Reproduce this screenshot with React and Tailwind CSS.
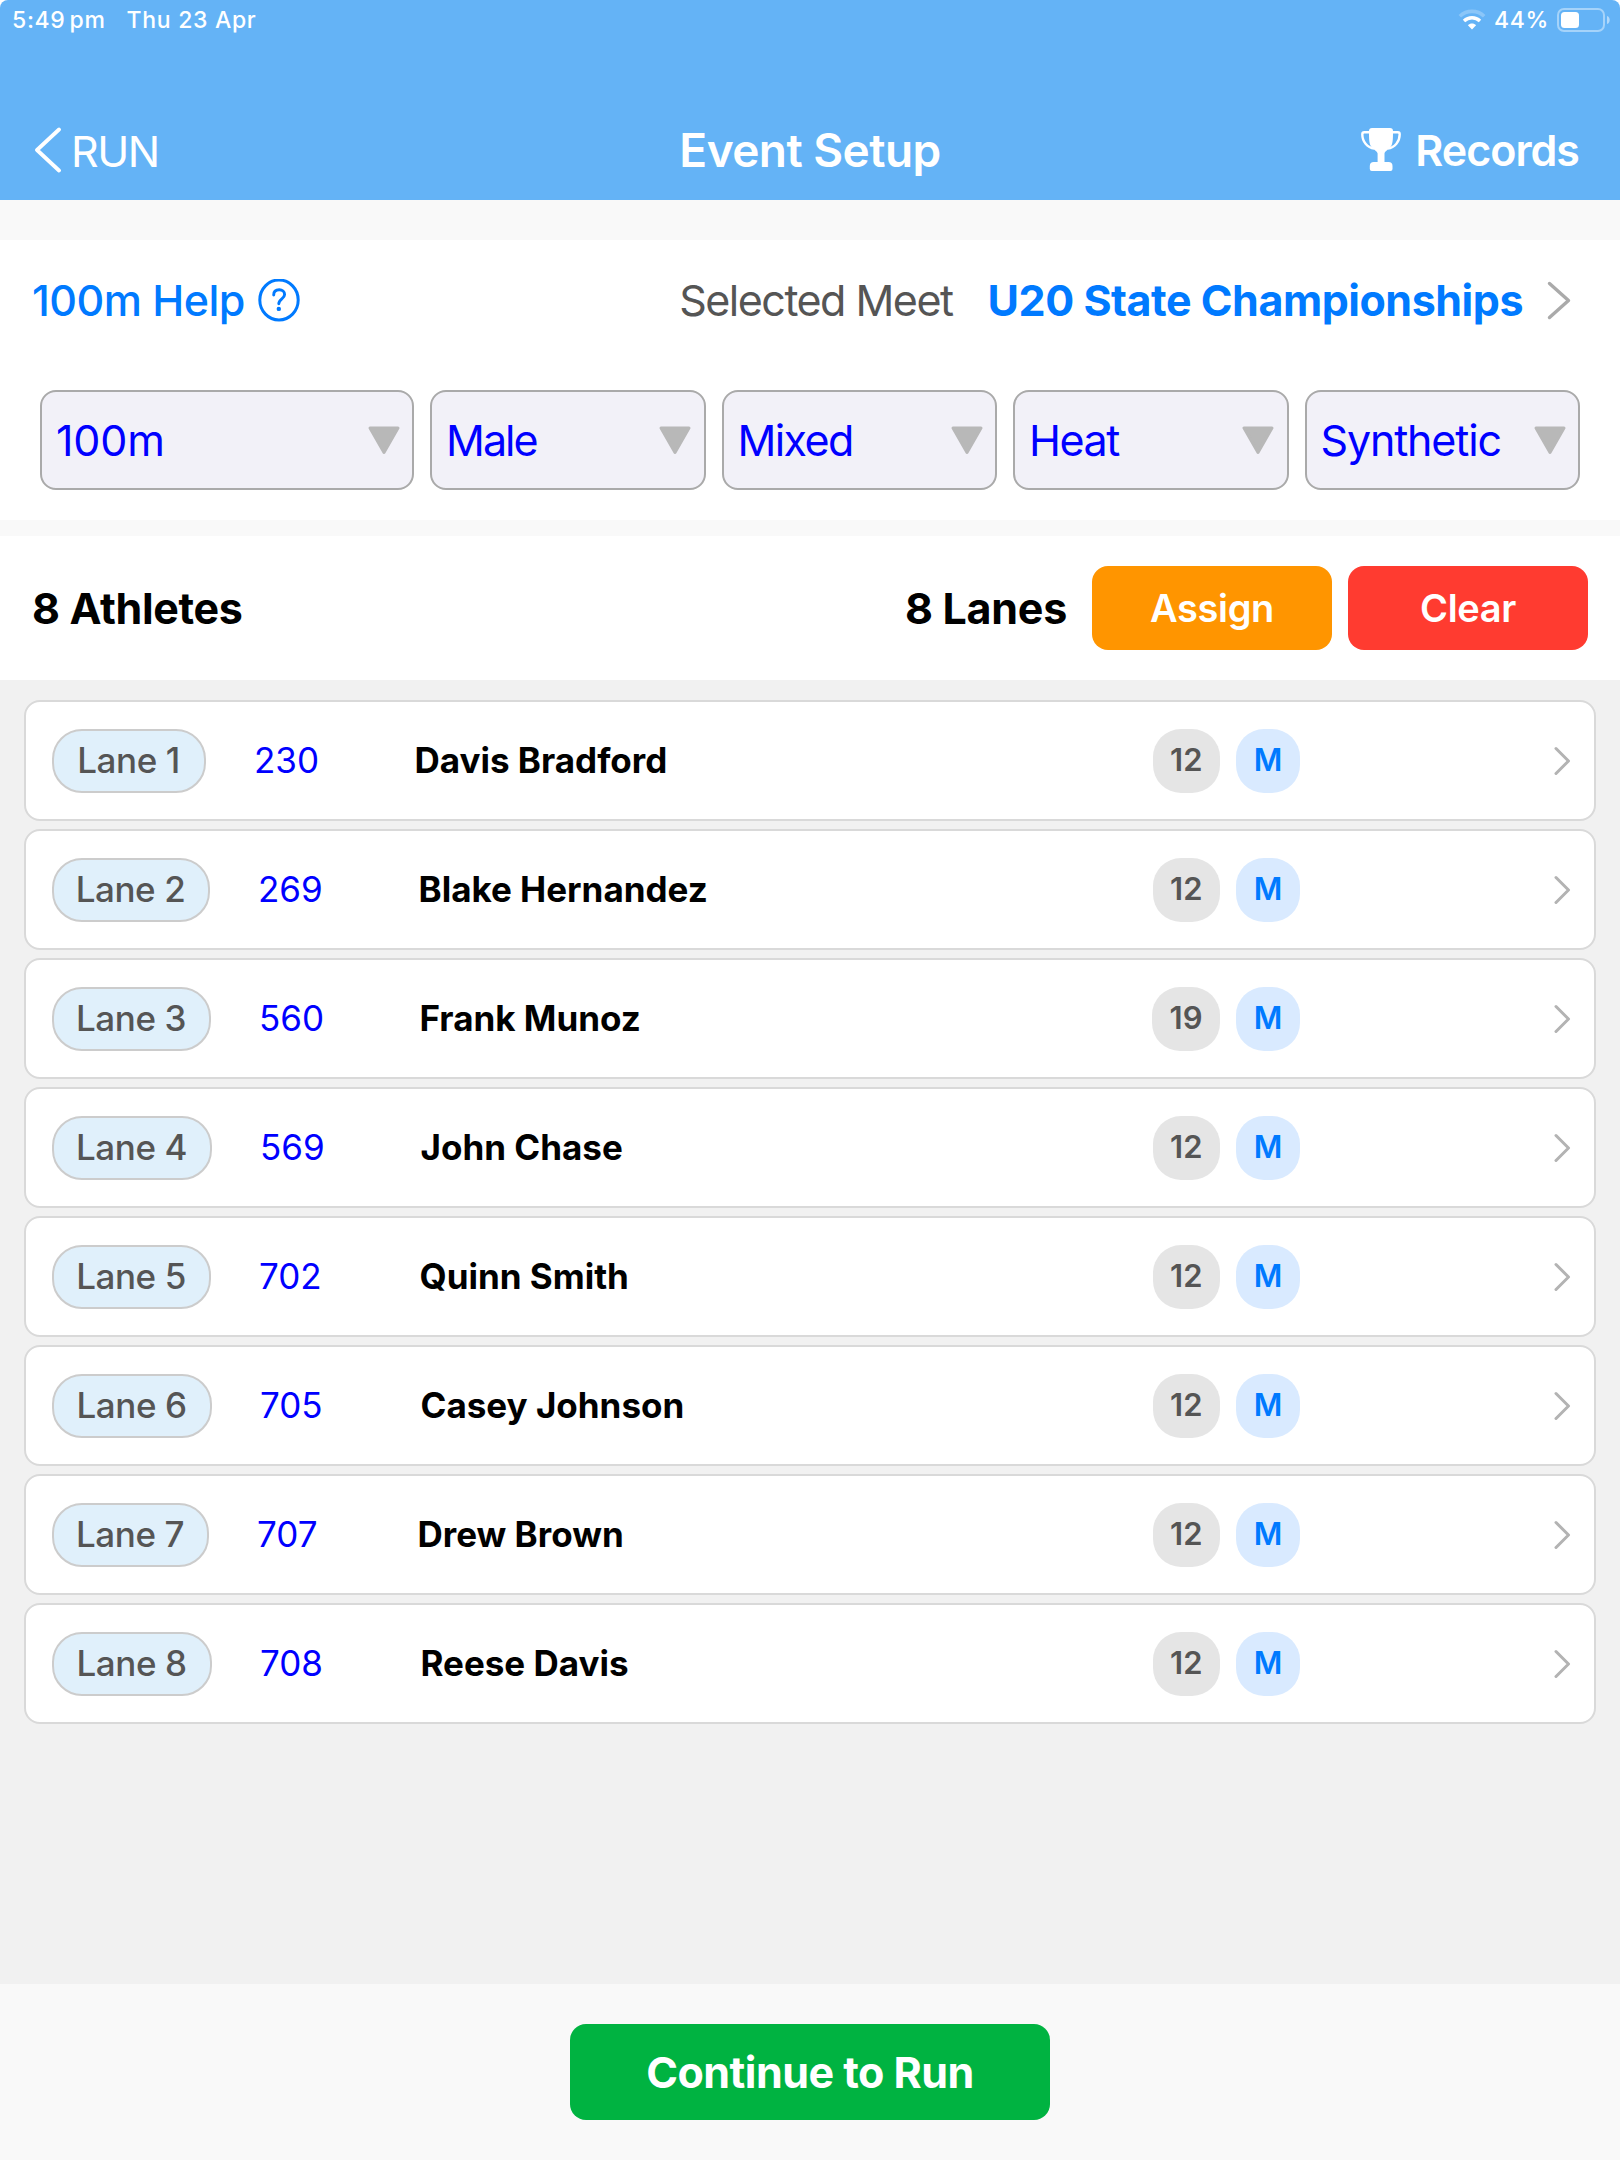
import { useState } from "react";

const athletes = [
  { lane: 1, bib: "230", name: "Davis Bradford", age: 12, sex: "M", pill: "w-[154px]" },
  { lane: 2, bib: "269", name: "Blake Hernandez", age: 12, sex: "M", pill: "w-[158px]" },
  { lane: 3, bib: "560", name: "Frank Munoz", age: 19, sex: "M", pill: "w-[159px]" },
  { lane: 4, bib: "569", name: "John Chase", age: 12, sex: "M", pill: "w-[160px]" },
  { lane: 5, bib: "702", name: "Quinn Smith", age: 12, sex: "M", pill: "w-[159px]" },
  { lane: 6, bib: "705", name: "Casey Johnson", age: 12, sex: "M", pill: "w-[160px]" },
  { lane: 7, bib: "707", name: "Drew Brown", age: 12, sex: "M", pill: "w-[157px]" },
  { lane: 8, bib: "708", name: "Reese Davis", age: 12, sex: "M", pill: "w-[160px]" },
];

function WifiIcon() {
  return (
    <svg width="28" height="21" viewBox="0 0 28 21" fill="none">
      <path d="M1.8 7.2C8.6 .7 19.4 .7 26.2 7.2" stroke="white" strokeOpacity="0.25" strokeWidth="3.6" />
      <path d="M6 12C10.6 7.6 17.4 7.6 22 12" stroke="white" strokeWidth="3.4" />
      <path d="M14 20.4 9.9 16.2C12.2 13.8 15.8 13.8 18.1 16.2Z" fill="white" />
    </svg>
  );
}

function BatteryIcon() {
  return (
    <svg width="54" height="24" viewBox="0 0 54 24" fill="none">
      <rect x="1" y="1" width="46" height="22" rx="6" stroke="white" strokeOpacity="0.42" strokeWidth="2" />
      <rect x="4" y="4" width="18" height="16" rx="3.5" fill="white" />
      <path d="M50 8C53.6 9 53.6 15 50 16Z" fill="white" fillOpacity="0.5" />
    </svg>
  );
}

function TrophyIcon() {
  return (
    <svg width="40" height="43" viewBox="0 0 40 43" fill="none">
      <path d="M9 4.2H3.2Q1.3 4.2 1.3 6.2C1.3 13.5 6 19.3 13.5 20.6" stroke="white" strokeWidth="2.4" />
      <path d="M31 4.2H36.8Q38.7 4.2 38.7 6.2C38.7 13.5 34 19.3 26.5 20.6" stroke="white" strokeWidth="2.4" />
      <path
        d="M11 0H29Q32 0 32 3C32 10 32 14 30.5 17.5C28.6 21 23.5 23.2 23.5 25.5V34H27.5Q31.5 34 31.5 38V41Q31.5 43 29.5 43H10.8Q8.8 43 8.8 41V38Q8.8 34 12.8 34H16.6V25.5C16.6 23.2 11.4 21 9.5 17.5C8 14 8 10 8 3Q8 0 11 0Z"
        fill="white"
      />
    </svg>
  );
}

function HelpIcon() {
  return (
    <svg width="42" height="44" viewBox="0 0 42 44" fill="none" stroke="#007aff">
      <ellipse cx="21" cy="21" rx="19.2" ry="20" strokeWidth="3" />
      <path d="M15.7 16C15.7 12.6 18 10.8 21.2 10.8C24.4 10.8 26.6 12.6 26.6 15.4C26.6 20 20.8 19.6 20.8 24.8" strokeWidth="2.9" strokeLinecap="round" />
      <circle cx="20.8" cy="29.9" r="2.2" fill="#007aff" stroke="none" />
    </svg>
  );
}

function Select({ value, className }) {
  return (
    <button
      className={`flex h-[100px] items-center justify-between rounded-[16px] border-2 border-[#aaaaaa] bg-[#f2f1f8] pr-[11.5px] pl-[14px] text-[43px] text-[#0000ff] ${className}`}
    >
      <span>{value}</span>
      <svg width="34" height="29" viewBox="0 0 34 29" className="shrink-0">
        <path d="M3 2H31L17 26.5Z" fill="#b8b8b8" stroke="#b8b8b8" strokeWidth="3" strokeLinejoin="round" />
      </svg>
    </button>
  );
}

function AthleteRow({ athlete }) {
  return (
    <div className="flex h-[121px] items-center rounded-[16px] border-2 border-[#d9d9d9] bg-white pr-[23px] pl-[26px]">
      <span
        className={`flex h-16 items-center justify-center rounded-[30px] border-2 border-[#cccccc] bg-[#e0f0fb] pr-px text-[35px] font-medium tracking-[-0.012em] text-[#555555] ${athlete.pill}`}
      >
        Lane {athlete.lane}
      </span>
      <span className="ml-[48px] w-[160px] text-[35px] text-[#0000ff]">{athlete.bib}</span>
      <span className="ml-[0.5px] text-[35px] font-bold text-black">{athlete.name}</span>
      <span className="ml-auto flex h-16 items-center rounded-[28px] bg-[#e5e5e5] px-[17.5px] text-[31px] font-semibold text-[#555555]">
        {athlete.age}
      </span>
      <span className="mr-[254px] ml-4 flex h-16 w-16 items-center justify-center rounded-[28px] bg-[#d9eaff] text-[31px] font-semibold text-[#007aff]">
        {athlete.sex}
      </span>
      <svg width="17" height="30" viewBox="0 0 17 30" fill="none">
        <path d="M2 2.5 14.5 15 2 27.5" stroke="#b3b3b3" strokeWidth="3" strokeLinecap="round" strokeLinejoin="round" />
      </svg>
    </div>
  );
}

function App() {
  const [list, setList] = useState(athletes);

  return (
    <div className="flex h-[2160px] w-[1620px] flex-col bg-white font-[Inter,sans-serif] whitespace-nowrap">
      <header className="flex h-[200px] flex-col rounded-t-[8px] bg-[#64b3f6] text-white">
        <div className="flex h-10 items-center pr-[9px] pl-3 text-[23px] font-medium tracking-[0.03em]">
          <span>5:49</span>
          <span className="ml-1">pm</span>
          <span className="ml-[21px]">Thu 23 Apr</span>
          <div className="ml-auto flex items-center">
            <WifiIcon />
            <span className="mr-2 ml-2">44%</span>
            <BatteryIcon />
          </div>
        </div>
        <div className="mt-[60px] grid h-[101px] grid-cols-3 items-center">
          <button className="flex items-center pl-[34px]">
            <svg width="28" height="46" viewBox="0 0 28 46" fill="none">
              <path d="M25 2.5 3 23 25 43.5" stroke="white" strokeWidth="3.8" strokeLinecap="round" strokeLinejoin="round" />
            </svg>
            <span className="mt-0.5 ml-[9px] text-[43px] tracking-[-0.035em]">RUN</span>
          </button>
          <h1 className="mt-px text-center text-[46px] font-semibold tracking-[-0.012em]">Event Setup</h1>
          <button className="flex items-center justify-end pr-[41px]">
            <TrophyIcon />
            <span className="ml-[14px] text-[43px] font-semibold tracking-[-0.023em]">Records</span>
          </button>
        </div>
      </header>

      <div className="h-10 bg-[#f9f9f9]" />

      <section className="h-[280px] px-[40px]">
        <div className="-mx-2 flex h-[121px] items-center text-[43px]">
          <span className="font-medium tracking-[-0.013em] text-[#007aff]">100m Help</span>
          <span className="ml-[13px]">
            <HelpIcon />
          </span>
          <span className="ml-auto tracking-[-0.035em] text-[#555555]">Selected Meet</span>
          <span className="ml-[35px] font-bold tracking-[-0.011em] text-[#007aff]">U20 State Championships</span>
          <svg width="24" height="40" viewBox="0 0 24 40" fill="none" className="mr-[17px] ml-[24px]">
            <path d="M2.5 2.5 21.5 19.5 2.5 36.5" stroke="#aaaaaa" strokeWidth="3.4" strokeLinecap="round" strokeLinejoin="round" />
          </svg>
        </div>
        <div className="mt-[29px] flex gap-4">
          <Select value="100m" className="w-[374px] tracking-[-0.004em]" />
          <Select value="Male" className="flex-1 tracking-[-0.045em]" />
          <Select value="Mixed" className="flex-1 tracking-[-0.037em]" />
          <Select value="Heat" className="flex-1 tracking-[-0.033em]" />
          <Select value="Synthetic" className="flex-1 tracking-[-0.027em]" />
        </div>
      </section>

      <div className="h-4 bg-[#f9f9f9]" />

      <section className="flex h-[144px] items-center px-[32px] text-[43px] font-bold text-black">
        <span className="tracking-[-0.008em]">{list.length} Athletes</span>
        <span className="ml-auto tracking-[-0.006em]">8 Lanes</span>
        <button className="ml-[25px] h-[84px] w-[240px] rounded-[16px] bg-[#ff9500] text-[38px] font-semibold tracking-[-0.01em] text-white">
          Assign
        </button>
        <button
          onClick={() => setList([])}
          className="ml-4 h-[84px] w-[240px] rounded-[16px] bg-[#ff3b30] text-[38px] font-semibold tracking-[-0.01em] text-white"
        >
          Clear
        </button>
      </section>

      <main className="flex flex-1 flex-col gap-2 bg-[#f1f1f1] px-6 pt-5">
        {list.map((athlete) => (
          <AthleteRow key={athlete.lane} athlete={athlete} />
        ))}
      </main>

      <footer className="flex h-[176px] items-center justify-center bg-[#f9f9f9]">
        <button className="h-24 w-[480px] rounded-[16px] bg-[#00b341] text-[43px] font-bold tracking-[-0.012em] text-white">
          Continue to Run
        </button>
      </footer>
    </div>
  );
}

export default App;
